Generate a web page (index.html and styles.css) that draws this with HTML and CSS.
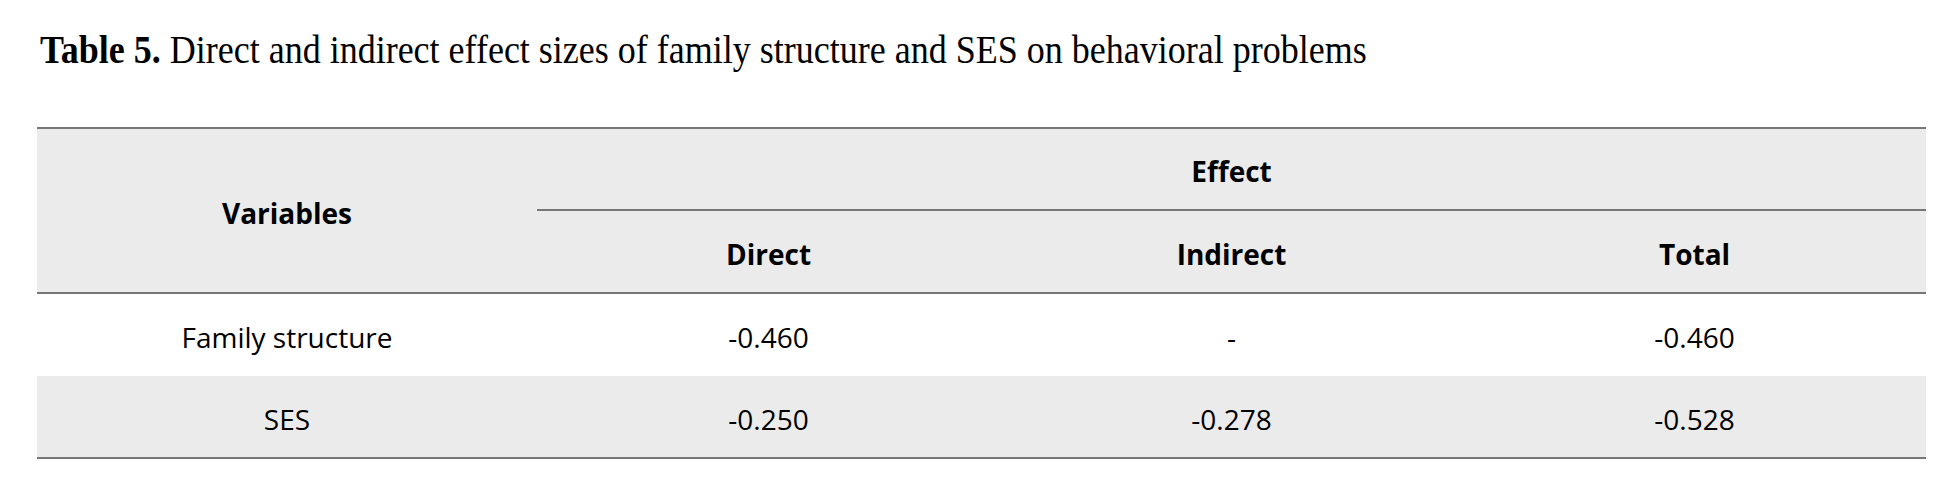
FILE: index.html
```html
<!DOCTYPE html>
<html lang="en">
<head>
<meta charset="utf-8">
<title>Table 5</title>
<link rel="stylesheet" href="styles.css">
</head>
<body>
<p class="caption"><span class="caption-text"><b>Table 5.</b> Direct and indirect effect sizes of family structure and SES on behavioral problems</span></p>
<table class="effects">
  <colgroup>
    <col class="col-var">
    <col class="col-num">
    <col class="col-num">
    <col class="col-num">
  </colgroup>
  <thead>
    <tr class="head-top">
      <th rowspan="2" class="var-head">Variables</th>
      <th colspan="3" class="group-head">Effect</th>
    </tr>
    <tr class="head-sub">
      <th>Direct</th>
      <th>Indirect</th>
      <th>Total</th>
    </tr>
  </thead>
  <tbody>
    <tr class="row">
      <td>Family structure</td>
      <td>-0.460</td>
      <td>-</td>
      <td>-0.460</td>
    </tr>
    <tr class="row row-alt row-last">
      <td>SES</td>
      <td>-0.250</td>
      <td>-0.278</td>
      <td>-0.528</td>
    </tr>
  </tbody>
</table>
</body>
</html>
```

FILE: styles.css
```css
html, body {
  margin: 0;
  padding: 0;
  background: #ffffff;
}

body {
  font-family: "Open Sans", "Noto Sans", sans-serif;
  color: #000000;
}

.caption {
  margin: 0 0 58px 0;
  padding: 33px 0 0 40px;
  height: 36px;
  font-family: "Liberation Serif", "Times New Roman", serif;
  font-size: 36px;
  line-height: 36px;
  white-space: nowrap;
}

.caption-text {
  display: inline-block;
  transform: scaleY(1.1);
  transform-origin: 0 30px;
}

.caption b {
  font-weight: 700;
}

.effects {
  margin-left: 37px;
  width: 1889px;
  table-layout: fixed;
  border-collapse: separate;
  border-spacing: 0;
}

.col-var {
  width: 500px;
}

.col-num {
  width: 463px;
}

.effects th,
.effects td {
  box-sizing: border-box;
  padding: 4px 0 0 0;
  text-align: center;
  vertical-align: middle;
  font-size: 28px;
  line-height: 38px;
  white-space: nowrap;
}

.effects th {
  font-weight: 700;
}

.effects td {
  font-weight: 400;
}

.effects thead th {
  background: #ebebeb;
}

.head-top th {
  border-top: 2px solid #777777;
  height: 84px;
}

.group-head {
  border-bottom: 2px solid #777777;
}

.var-head {
  border-bottom: 2px solid #777777;
}

.head-sub th {
  height: 83px;
  border-bottom: 2px solid #777777;
}

.row td {
  height: 82px;
  background: #ffffff;
}

.row-alt td {
  background: #ebebeb;
}

.row-last td {
  height: 83px;
  border-bottom: 2px solid #777777;
}
```
